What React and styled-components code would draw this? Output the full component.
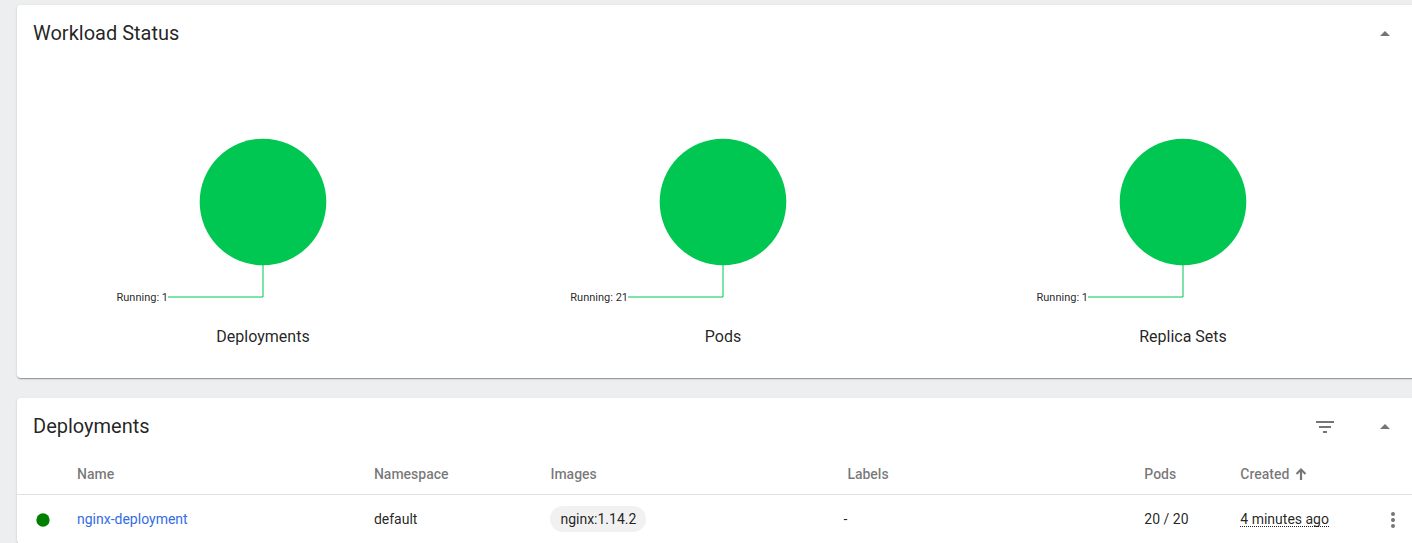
import React from 'react';
import styled, { createGlobalStyle } from 'styled-components';

const GlobalStyle = createGlobalStyle`
  *, *::before, *::after { box-sizing: border-box; }
  body {
    margin: 0;
    background: #edeef0;
    color: rgba(0, 0, 0, 0.87);
    font: 400 14px/20px Roboto, "Noto Sans", sans-serif;
  }
`;

const Page = styled.main`
  display: flex;
  flex-direction: column;
  gap: 20px;
  height: 100vh;
  overflow: hidden;
  padding: 5px 0 0 17px;
`;

const Card = styled.section`
  flex: none;
  margin-right: -17px;
  background: #fff;
  border-radius: 4px;
  box-shadow: 0 2px 1px -1px rgba(0, 0, 0, 0.2), 0 1px 1px 0 rgba(0, 0, 0, 0.14),
    0 1px 3px 0 rgba(0, 0, 0, 0.12);
`;

const CardHeader = styled.header`
  display: flex;
  align-items: center;
  justify-content: space-between;
  height: 56px;
  padding: 0 24px 0 16px;
`;

const CardTitle = styled.h2`
  margin: 0;
  font-size: 20px;
  font-weight: 400;
  line-height: 32px;
`;

const Actions = styled.div`
  display: flex;
  gap: 20px;
  padding-top: 2px;
`;

const IconButton = styled.button`
  display: flex;
  align-items: center;
  justify-content: center;
  width: 40px;
  height: 40px;
  padding: 0;
  border: 0;
  border-radius: 50%;
  background: none;
  color: #757575;
  cursor: pointer;
`;

const Icon = styled.svg`
  display: block;
  width: ${({ $size = 24 }) => $size}px;
  height: ${({ $size = 24 }) => $size}px;
  fill: currentColor;
`;

const Charts = styled.div`
  display: grid;
  grid-template-columns: repeat(3, 1fr);
  padding: 0 16px 29px;
`;

const ChartFigure = styled.figure`
  display: flex;
  flex-direction: column;
  align-items: center;
  margin: 0;
`;

const ChartDrawing = styled.svg`
  display: block;
  width: 320px;
  height: 264px;
`;

const ChartLabel = styled.text`
  font-size: 11px;
  fill: rgba(0, 0, 0, 0.87);
  text-anchor: end;
`;

const ChartCaption = styled.figcaption`
  font-size: 16px;
  line-height: 24px;
`;

const Table = styled.table`
  width: 100%;
  table-layout: fixed;
  border-collapse: separate;
  border-spacing: 0;
`;

const HeadCell = styled.th`
  width: ${({ $width }) => $width};
  height: 41px;
  padding: 0;
  border-bottom: 1px solid rgba(0, 0, 0, 0.12);
  color: rgba(0, 0, 0, 0.54);
  font-weight: 500;
  text-align: left;
`;

const Cell = styled.td`
  height: 49px;
  padding: 0;
  border-bottom: 1px solid rgba(0, 0, 0, 0.12);
`;

const SortButton = styled.button`
  display: flex;
  align-items: center;
  gap: 6px;
  padding: 0;
  border: 0;
  background: none;
  color: inherit;
  font: inherit;
  cursor: pointer;
`;

const StatusCell = styled(Cell)`
  padding: 2px 0 0 18px;
  color: #008000;
`;

const NameLink = styled.a`
  color: #326de6;
  text-decoration: none;
`;

const ChipList = styled.div`
  display: flex;
  margin: 0 -4px;
`;

const Chip = styled.span`
  margin: 0 4px;
  padding: 3px 10px;
  border-radius: 13px;
  background: #f1f1f1;
`;

const Age = styled.span`
  display: inline-block;
  border-bottom: 1px dotted currentColor;
  line-height: 14px;
`;

const MenuCell = styled(Cell)`
  padding: 2px 0 0 4px;
`;

const workloads = [
  { name: 'Deployments', running: 1 },
  { name: 'Pods', running: 21 },
  { name: 'Replica Sets', running: 1 },
];

const columns = [
  { label: 'Name', width: '21.03%' },
  { label: 'Namespace', width: '12.5%' },
  { label: 'Images', width: '21.03%' },
  { label: 'Labels', width: '21.03%' },
  { label: 'Pods', width: '6.8%' },
];

function CollapseButton() {
  return (
    <IconButton type="button" aria-label="Collapse">
      <Icon viewBox="0 0 24 24" aria-hidden="true">
        <path d="M7 14l5-5 5 5z" />
      </Icon>
    </IconButton>
  );
}

function WorkloadChart({ name, running }) {
  return (
    <ChartFigure>
      <ChartDrawing viewBox="0 0 320 264" role="img" aria-label={`${name}, running: ${running}`}>
        <path d="M160 204V236H65" fill="none" stroke="#00c752" />
        <circle cx="160" cy="141" r="63.3" fill="#00c752" />
        <ChartLabel x="65" y="240">Running: {running}</ChartLabel>
      </ChartDrawing>
      <ChartCaption>{name}</ChartCaption>
    </ChartFigure>
  );
}

export default function App() {
  return (
    <>
      <GlobalStyle />
      <Page>
        <Card>
          <CardHeader>
            <CardTitle>Workload Status</CardTitle>
            <Actions>
              <CollapseButton />
            </Actions>
          </CardHeader>
          <Charts>
            {workloads.map((w) => (
              <WorkloadChart key={w.name} {...w} />
            ))}
          </Charts>
        </Card>

        <Card>
          <CardHeader>
            <CardTitle>Deployments</CardTitle>
            <Actions>
              <IconButton type="button" aria-label="Filter">
                <Icon viewBox="0 0 24 24" aria-hidden="true">
                  <path d="M10 18h4v-2h-4v2zM3 6v2h18V6H3zm3 7h12v-2H6v2z" />
                </Icon>
              </IconButton>
              <CollapseButton />
            </Actions>
          </CardHeader>
          <Table>
            <thead>
              <tr>
                <HeadCell $width="60px" aria-label="Status" />
                {columns.map((c) => (
                  <HeadCell key={c.label} $width={c.width} scope="col">{c.label}</HeadCell>
                ))}
                <HeadCell scope="col" aria-sort="ascending">
                  <SortButton type="button">
                    Created
                    <Icon $size={12} viewBox="0 0 12 12" aria-hidden="true">
                      <path d="M6 0l5.2 5.2-1.5 1.5L7.1 4.1V12H4.9V4.1L2.3 6.7.8 5.2z" />
                    </Icon>
                  </SortButton>
                </HeadCell>
                <HeadCell $width="60px" aria-label="Actions" />
              </tr>
            </thead>
            <tbody>
              <tr>
                <StatusCell>
                  <Icon $size={16} viewBox="0 0 24 24" role="img" aria-label="Running">
                    <circle cx="12" cy="12" r="10" />
                  </Icon>
                </StatusCell>
                <Cell><NameLink href="#nginx-deployment">nginx-deployment</NameLink></Cell>
                <Cell>default</Cell>
                <Cell><ChipList><Chip>nginx:1.14.2</Chip></ChipList></Cell>
                <Cell><ChipList>-</ChipList></Cell>
                <Cell>20 / 20</Cell>
                <Cell><Age>4 minutes ago</Age></Cell>
                <MenuCell>
                  <IconButton type="button" aria-label="More actions">
                    <Icon viewBox="0 0 24 24" aria-hidden="true">
                      <path d="M12 8a2 2 0 1 0 0-4 2 2 0 0 0 0 4zm0 2a2 2 0 1 0 0 4 2 2 0 0 0 0-4zm0 6a2 2 0 1 0 0 4 2 2 0 0 0 0-4z" />
                    </Icon>
                  </IconButton>
                </MenuCell>
              </tr>
            </tbody>
          </Table>
        </Card>
      </Page>
    </>
  );
}
